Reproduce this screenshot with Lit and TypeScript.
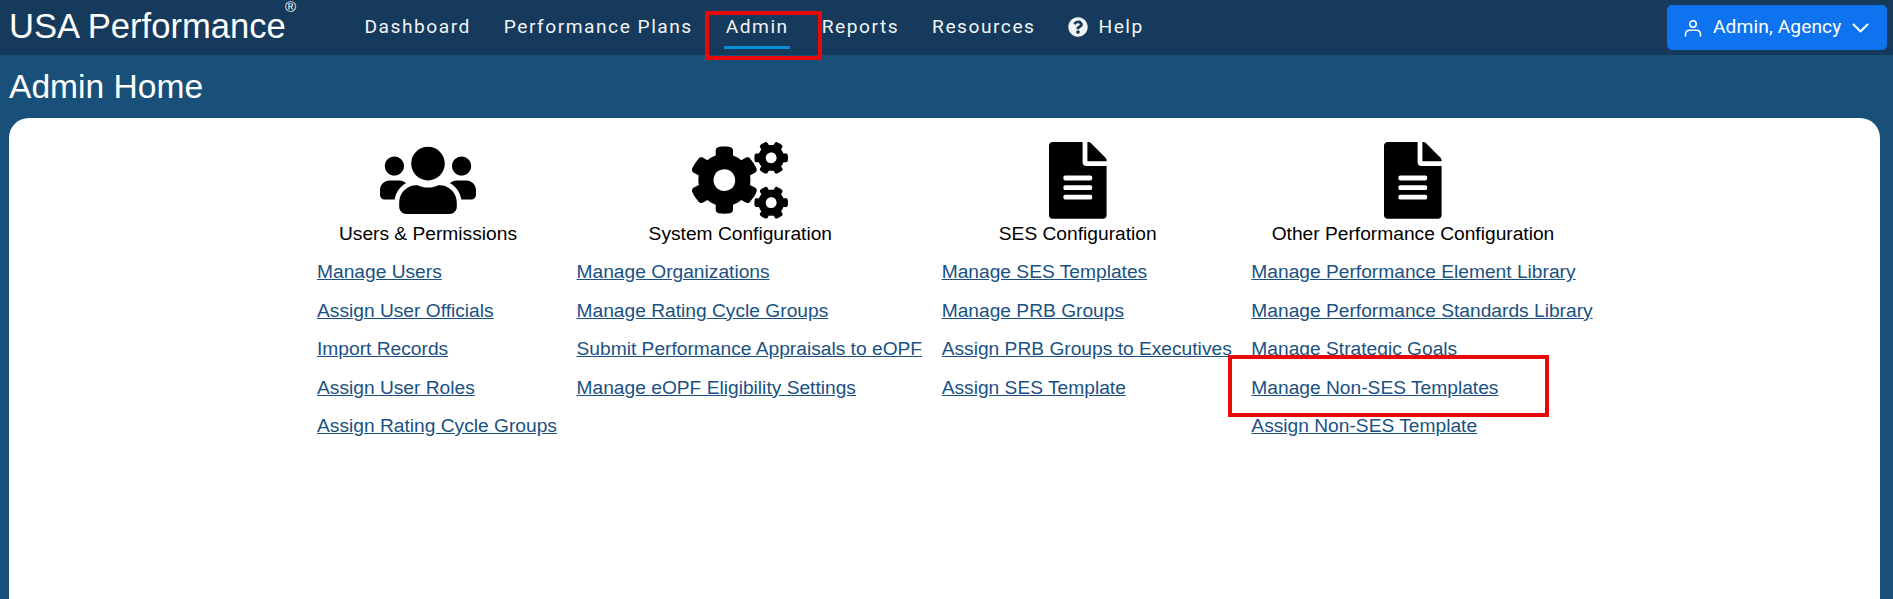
import {LitElement, html, css, svg} from 'lit';
import {customElement} from 'lit/decorators.js';

const USERS = svg`<path d="M96 224c35.3 0 64-28.7 64-64s-28.7-64-64-64-64 28.7-64 64 28.7 64 64 64zm448 0c35.3 0 64-28.7 64-64s-28.7-64-64-64-64 28.7-64 64 28.7 64 64 64zm32 32h-64c-17.6 0-33.5 7.1-45.1 18.6 40.3 22.1 68.9 62 75.1 109.4h66c17.7 0 32-14.3 32-32v-32c0-35.3-28.7-64-64-64zm-256 0c61.9 0 112-50.1 112-112S381.9 32 320 32 208 82.1 208 144s50.1 112 112 112zm76.8 32h-8.3c-20.8 10-43.9 16-68.5 16s-47.6-6-68.5-16h-8.3C179.6 288 128 339.6 128 403.2V432c0 26.5 21.5 48 48 48h288c26.5 0 48-21.5 48-48v-28.8c0-63.6-51.6-115.2-115.2-115.2zm-223.7-13.4C161.5 263.1 145.6 256 128 256H64c-35.3 0-64 28.7-64 64v32c0 17.7 14.3 32 32 32h65.9c6.3-47.4 34.9-87.3 75.2-109.4z"/>`;
const COGS = svg`<path d="M512.1 191l-8.2 14.3c-3 5.3-9.4 7.5-15.1 5.4-11.8-4.4-22.6-10.7-32.1-18.6-4.6-3.8-5.8-10.5-2.8-15.7l8.2-14.3c-6.9-8-12.3-17.3-15.9-27.4h-16.5c-6 0-11.2-4.3-12.2-10.3-2-12-2.1-24.6 0-37.1 1-6 6.2-10.4 12.2-10.4h16.5c3.6-10.1 9-19.4 15.9-27.4l-8.2-14.3c-3-5.2-1.9-11.9 2.8-15.7 9.5-7.9 20.4-14.2 32.1-18.6 5.7-2.1 12.1.1 15.1 5.4l8.2 14.3c10.5-1.9 21.2-1.9 31.7 0L552 6.3c3-5.3 9.4-7.5 15.1-5.4 11.8 4.4 22.6 10.7 32.1 18.6 4.6 3.8 5.8 10.5 2.8 15.7l-8.2 14.3c6.9 8 12.3 17.3 15.9 27.4h16.5c6 0 11.2 4.3 12.2 10.3 2 12 2.1 24.6 0 37.1-1 6-6.2 10.4-12.2 10.4h-16.5c-3.6 10.1-9 19.4-15.9 27.4l8.2 14.3c3 5.2 1.9 11.9-2.8 15.7-9.5 7.9-20.4 14.2-32.1 18.6-5.7 2.1-12.1-.1-15.1-5.4l-8.2-14.3c-10.4 1.9-21.2 1.9-31.7 0zm-10.5-58.8c38.5 29.6 82.4-14.3 52.8-52.8-38.5-29.7-82.4 14.3-52.8 52.8zM386.3 286.1l33.7 16.8c10.1 5.8 14.5 18.1 10.5 29.1-8.9 24.2-26.4 46.4-42.6 65.8-7.4 8.9-20.2 11.1-30.3 5.3l-29.1-16.8c-16 13.7-34.6 24.6-54.9 31.7v33.6c0 11.6-8.3 21.6-19.7 23.6-24.6 4.2-50.4 4.4-75.9 0-11.5-2-20-11.9-20-23.6V418c-20.3-7.2-38.9-18-54.9-31.7L74 403c-10 5.8-22.9 3.6-30.3-5.3-16.2-19.4-33.3-41.6-42.2-65.7-4-10.9.4-23.2 10.5-29.1l33.3-16.8c-3.9-20.9-3.9-42.4 0-63.4L12 205.8c-10.1-5.8-14.6-18.1-10.5-29 8.9-24.2 26-46.4 42.2-65.8 7.4-8.9 20.2-11.1 30.3-5.3l29.1 16.8c16-13.7 34.6-24.6 54.9-31.7V57.1c0-11.5 8.2-21.5 19.6-23.5 24.6-4.2 50.5-4.4 76-.1 11.5 2 20 11.9 20 23.6v33.6c20.3 7.2 38.9 18 54.9 31.7l29.1-16.8c10-5.8 22.9-3.6 30.3 5.3 16.2 19.4 33.2 41.6 42.1 65.8 4 10.9.1 23.2-10 29.1l-33.7 16.8c3.9 21 3.9 42.5 0 63.5zm-117.6 21.1c59.2-77-28.7-164.9-105.7-105.7-59.2 77 28.7 164.9 105.7 105.7zm243.4 182.7l-8.2 14.3c-3 5.3-9.4 7.5-15.1 5.4-11.8-4.4-22.6-10.7-32.1-18.6-4.6-3.8-5.8-10.5-2.8-15.7l8.2-14.3c-6.9-8-12.3-17.3-15.9-27.4h-16.5c-6 0-11.2-4.3-12.2-10.3-2-12-2.1-24.6 0-37.1 1-6 6.2-10.4 12.2-10.4h16.5c3.6-10.1 9-19.4 15.9-27.4l-8.2-14.3c-3-5.2-1.9-11.9 2.8-15.7 9.5-7.9 20.4-14.2 32.1-18.6 5.7-2.1 12.1.1 15.1 5.4l8.2 14.3c10.5-1.9 21.2-1.9 31.7 0l8.2-14.3c3-5.3 9.4-7.5 15.1-5.4 11.8 4.4 22.6 10.7 32.1 18.6 4.6 3.8 5.8 10.5 2.8 15.7l-8.2 14.3c6.9 8 12.3 17.3 15.9 27.4h16.5c6 0 11.2 4.3 12.2 10.3 2 12 2.1 24.6 0 37.1-1 6-6.2 10.4-12.2 10.4h-16.5c-3.6 10.1-9 19.4-15.9 27.4l8.2 14.3c3 5.2 1.9 11.9-2.8 15.7-9.5 7.9-20.4 14.2-32.1 18.6-5.7 2.1-12.1-.1-15.1-5.4l-8.2-14.3c-10.4 1.9-21.2 1.9-31.7 0zM501.6 431c38.5 29.6 82.4-14.3 52.8-52.8-38.5-29.6-82.4 14.3-52.8 52.8z"/>`;
const FILE = svg`<path d="M224 136V0H24C10.7 0 0 10.7 0 24v464c0 13.3 10.7 24 24 24h336c13.3 0 24-10.7 24-24V160H248c-13.2 0-24-10.8-24-24zm64 236c0 6.6-5.4 12-12 12H108c-6.6 0-12-5.4-12-12v-8c0-6.6 5.4-12 12-12h168c6.6 0 12 5.4 12 12v8zm0-64c0 6.6-5.4 12-12 12H108c-6.6 0-12-5.4-12-12v-8c0-6.6 5.4-12 12-12h168c6.6 0 12 5.4 12 12v8zm0-72v8c0 6.6-5.4 12-12 12H108c-6.6 0-12-5.4-12-12v-8c0-6.6 5.4-12 12-12h168c6.6 0 12 5.4 12 12zm96-114.1v6.1H256V0h6.1c6.4 0 12.5 2.5 17 7l97.9 98c4.5 4.5 7 10.6 7 16.9z"/>`;
const HELP = svg`<path d="M504 256c0 136.997-111.043 248-248 248S8 392.997 8 256C8 119.083 119.043 8 256 8s248 111.083 248 248zM262.655 90c-54.497 0-89.255 22.957-116.549 63.758-3.536 5.286-2.353 12.415 2.715 16.258l34.699 26.31c5.205 3.947 12.621 3.008 16.665-2.122 17.864-22.658 30.113-35.797 57.303-35.797 20.429 0 45.698 13.148 45.698 32.958 0 14.976-12.363 22.667-32.534 33.976C247.128 238.528 216 254.941 216 296v4c0 6.627 5.373 12 12 12h56c6.627 0 12-5.373 12-12v-1.333c0-28.462 83.186-29.647 83.186-106.667 0-58.002-60.165-102-116.531-102zM256 338c-25.365 0-46 20.635-46 46 0 25.364 20.635 46 46 46s46-20.636 46-46c0-25.365-20.635-46-46-46z"/>`;

const columns = [
    {
        title: 'Users & Permissions', icon: USERS, box: '0 0 640 512', width: 96,
        links: ['Manage Users', 'Assign User Officials', 'Import Records', 'Assign User Roles', 'Assign Rating Cycle Groups'],
    },
    {
        title: 'System Configuration', icon: COGS, box: '0 0 640 512', width: 96,
        links: ['Manage Organizations', 'Manage Rating Cycle Groups', 'Submit Performance Appraisals to eOPF', 'Manage eOPF Eligibility Settings'],
    },
    {
        title: 'SES Configuration', icon: FILE, box: '0 0 384 512', width: 57.6,
        links: ['Manage SES Templates', 'Manage PRB Groups', 'Assign PRB Groups to Executives', 'Assign SES Template'],
    },
    {
        title: 'Other Performance Configuration', icon: FILE, box: '0 0 384 512', width: 57.6,
        links: ['Manage Performance Element Library', 'Manage Performance Standards Library', 'Manage Strategic Goals', 'Manage Non-SES Templates', 'Assign Non-SES Template'],
    },
];

@customElement('app-root')
export class AppRoot extends LitElement {
    static styles = css`
        :host {
            display: block;
            position: relative;
            height: 599px;
            overflow: hidden;
            background: #19507a;
            font-family: "Liberation Sans", Arial, sans-serif;
        }

        /* Top bar */
        .topbar {
            display: flex;
            align-items: center;
            height: 55px;
            padding: 0 6px 0 9px;
            background: #153a5b;
            color: #fff;
        }
        .brand {
            position: relative;
            top: -1px;
            font-size: 34.6px;
            width: 355.5px;
            flex: none;
        }
        .brand sup {
            position: absolute;
            left: 276px;
            top: -9px;
            font-size: 15px;
        }
        .nav {
            position: relative;
            top: -1px;
            display: flex;
            gap: 33px;
            font-family: Roboto, sans-serif;
            font-size: 19.2px;
            letter-spacing: 1.5px;
            color: #f2f4f6;
        }
        .nav a {
            position: relative;
            display: flex;
            align-items: center;
            gap: 10px;
        }
        .nav a.active::after {
            content: '';
            position: absolute;
            left: -1.5px;
            right: -1px;
            bottom: -11px;
            height: 3px;
            background: #0a8fd6;
        }
        .nav svg {
            width: 20px;
            height: 20px;
            fill: currentColor;
        }
        .user {
            margin-left: auto;
            display: flex;
            align-items: center;
            width: 220px;
            height: 45px;
            box-sizing: border-box;
            padding: 0 17px;
            border-radius: 5px;
            background: #0d73ee;
            font-family: Roboto, sans-serif;
            font-size: 19.2px;
        }
        .user span {
            position: relative;
            top: -1px;
            margin: 0 11px;
            white-space: nowrap;
            letter-spacing: 0.1px;
        }
        .user svg {
            flex: none;
            fill: none;
            stroke: #fff;
        }

        /* Page */
        h1 {
            margin: 0;
            padding-left: 9px;
            height: 63px;
            font-size: 33.6px;
            font-weight: 400;
            line-height: 63px;
            color: #fff;
        }
        .card {
            margin: 0 13px 0 9px;
            height: 481px;
            border-radius: 20px 20px 0 0;
            background: #fff;
            box-sizing: border-box;
            padding: 24px 0 0 308px;
            display: flex;
            gap: 19.6px;
        }
        .head {
            margin-right: 18px;
            text-align: center;
            font-size: 19.2px;
            line-height: 24px;
            color: #000;
        }
        .head svg {
            display: block;
            height: 76.8px;
            margin: 0 auto 3px;
        }
        .links {
            margin-top: 7.5px;
            font-size: 19.2px;
            line-height: 38.4px;
        }
        .links a {
            display: block;
            width: fit-content;
            white-space: nowrap;
            color: #1a5182;
            text-decoration: underline;
        }

        /* Red annotation boxes lying over the page */
        .mark {
            position: absolute;
            box-sizing: border-box;
            border: 4.5px solid #e80808;
        }
        .mark.nav-mark {
            left: 705px;
            top: 11px;
            width: 117px;
            height: 49px;
        }
        .mark.link-mark {
            left: 1228px;
            top: 355px;
            width: 321px;
            height: 62px;
        }
    `;

    render() {
        return html`
            <header class="topbar">
                <div class="brand">USA Performance<sup>®</sup></div>
                <nav class="nav">
                    <a>Dashboard</a>
                    <a>Performance Plans</a>
                    <a class="active">Admin</a>
                    <a>Reports</a>
                    <a>Resources</a>
                    <a><svg viewBox="0 0 512 512">${HELP}</svg>Help</a>
                </nav>
                <div class="user">
                    <svg width="18" height="18" viewBox="0 0 18 18" stroke-width="1.6" stroke-linecap="round">
                        <circle cx="9" cy="5" r="3.2"/>
                        <path d="M1.5 17v-1.5c0-2.6 2-4.2 4.5-4.2h6c2.5 0 4.5 1.6 4.5 4.2V17"/>
                    </svg>
                    <span>Admin, Agency</span>
                    <svg width="17" height="10" viewBox="0 0 17 10" stroke-width="2" stroke-linecap="round" stroke-linejoin="round">
                        <path d="M1.5 1.5l7 7 7-7"/>
                    </svg>
                </div>
            </header>
            <h1>Admin Home</h1>
            <main class="card">
                ${columns.map((col) => html`
                    <section>
                        <div class="head">
                            <svg viewBox=${col.box} style="width:${col.width}px">${col.icon}</svg>
                            ${col.title}
                        </div>
                        <div class="links">
                            ${col.links.map((link) => html`<a>${link}</a>`)}
                        </div>
                    </section>
                `)}
            </main>
            <div class="mark nav-mark"></div>
            <div class="mark link-mark"></div>
        `;
    }
}
